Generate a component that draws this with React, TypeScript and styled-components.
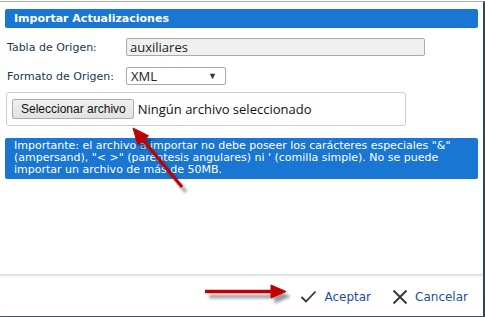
import React from "react";
import styled, { createGlobalStyle } from "styled-components";

const GlobalStyle = createGlobalStyle`
  html, body { margin: 0; padding: 0; background: #ffffff; }
  * { box-sizing: border-box; }
`;

const Dialog = styled.div`
  position: relative;
  margin-top: 1px;
  width: 485px;
  height: 316px;
  border-top: 1px solid #ababab;
  border-right: 2px solid #3a4350;
  border-bottom: 1px solid #4b5563;
  display: flex;
  flex-direction: column;
  background: #ffffff;
  font-family: "DejaVu Sans", Verdana, sans-serif;
`;

const Body = styled.div`
  flex: 1;
  padding: 7px 5px 0 5px;
  display: flex;
  flex-direction: column;
`;

const TitleBar = styled.div`
  height: 19px;
  line-height: 19px;
  background: #1976d2;
  border-radius: 2px;
  color: #ffffff;
  font-weight: bold;
  font-size: 11px;
  padding-left: 9px;
  white-space: nowrap;
`;

const FormRow = styled.div<{ $top: number }>`
  display: flex;
  align-items: center;
  margin-top: ${(p) => p.$top}px;
  padding-left: 2px;
`;

const Label = styled.label`
  width: 119px;
  font-size: 11px;
  color: #22364f;
  white-space: nowrap;
`;

const TextInput = styled.div`
  width: 299px;
  height: 18px;
  background: #f0f0f0;
  border: 1px solid #a9a9a9;
  border-radius: 2px;
  font-family: "Open Sans", sans-serif;
  font-size: 13px;
  line-height: 16px;
  padding-left: 3px;
  color: #222;
`;

const Select = styled.div`
  width: 100px;
  height: 18px;
  background: #ffffff;
  border: 1px solid #a9a9a9;
  border-radius: 2px;
  font-family: "Open Sans", sans-serif;
  font-size: 13px;
  line-height: 16px;
  padding: 0 8px 0 4px;
  color: #222;
  display: flex;
  align-items: center;
  justify-content: space-between;
`;

const Caret = styled.span`
  font-size: 9px;
  color: #333;
`;

const FileBox = styled.div`
  margin: 7px 0 0 1px;
  width: 400px;
  height: 34px;
  border: 1px solid #cccccc;
  border-radius: 3px;
  display: flex;
  align-items: center;
  padding-left: 5px;
  gap: 4px;
`;

const FileButton = styled.div`
  height: 20px;
  padding: 0 7px 0 8px;
  border: 1px solid #adadad;
  border-radius: 2px;
  background: linear-gradient(#f0f0f0, #e1e1e1);
  font-family: "Liberation Sans", Arial, sans-serif;
  font-size: 12px;
  line-height: 18px;
  color: #111;
  white-space: nowrap;
`;

const FileName = styled.span`
  font-family: "Open Sans", sans-serif;
  font-size: 13px;
  color: #111;
  white-space: nowrap;
`;

const Notice = styled.div`
  margin-top: 12px;
  height: 41px;
  background: #1976d2;
  border-radius: 2px;
  color: #ffffff;
  font-size: 11px;
  line-height: 12px;
  padding: 2px 6px 0 9px;
`;

const Footer = styled.div`
  height: 42px;
  position: relative;
  display: flex;
  align-items: center;
  justify-content: flex-end;
  padding-right: 15px;
  gap: 21px;
  border-top: 1px solid #dcdcdc;
  box-shadow: inset 0 2px 2px -1px rgba(0, 0, 0, 0.12);
`;

const Action = styled.div`
  display: flex;
  align-items: center;
  gap: 7px;
  font-size: 12px;
  color: #234d9e;
  padding-top: 2px;
`;

const Overlay = styled.svg`
  position: absolute;
  top: -2px;
  left: 0;
  pointer-events: none;
`;

export default function App() {
  return (
    <>
      <GlobalStyle />
      <Dialog>
        <Body>
          <TitleBar>Importar Actualizaciones</TitleBar>
          <FormRow $top={10}>
            <Label>Tabla de Origen:</Label>
            <TextInput>auxiliares</TextInput>
          </FormRow>
          <FormRow $top={11}>
            <Label>Formato de Origen:</Label>
            <Select>
              <span>XML</span>
              <Caret>▼</Caret>
            </Select>
          </FormRow>
          <FileBox>
            <FileButton>Seleccionar archivo</FileButton>
            <FileName>Ningún archivo seleccionado</FileName>
          </FileBox>
          <Notice>
            Importante: el archivo a importar no debe poseer los carácteres especiales "&amp;"
            <br />
            (ampersand), "&lt; &gt;" (paréntesis angulares) ni ' (comilla simple). No se puede
            <br />
            importar un archivo de más de 50MB.
          </Notice>
        </Body>
        <Footer>
          <Action>
            <svg width="17" height="14" viewBox="0 0 17 14">
              <polyline points="1.5,7 6,11.5 15.5,1.5" fill="none" stroke="#333" strokeWidth="1.8" />
            </svg>
            Aceptar
          </Action>
          <Action>
            <svg width="16" height="16" viewBox="0 0 16 16">
              <path d="M1.5 1.5 L14.5 14.5 M14.5 1.5 L1.5 14.5" fill="none" stroke="#333" strokeWidth="1.8" />
            </svg>
            Cancelar
          </Action>
        </Footer>
        <Overlay width="485" height="317" viewBox="0 0 485 317">
          <defs>
            <filter id="sh" x="-20%" y="-20%" width="160%" height="160%">
              <feDropShadow dx="4" dy="5" stdDeviation="1.6" floodColor="#000" floodOpacity="0.4" />
            </filter>
          </defs>
          <g filter="url(#sh)" fill="#c00000" stroke="#c00000">
            <line x1="182" y1="187" x2="143" y2="140" strokeWidth="3" />
            <polygon points="133,128 148.6,135.8 137.8,144.8" strokeWidth="1" />
            <line x1="205" y1="291.5" x2="273" y2="291.5" strokeWidth="3.5" />
            <polygon points="271,285 286,291.5 271,298" strokeWidth="1" />
          </g>
        </Overlay>
      </Dialog>
    </>
  );
}
